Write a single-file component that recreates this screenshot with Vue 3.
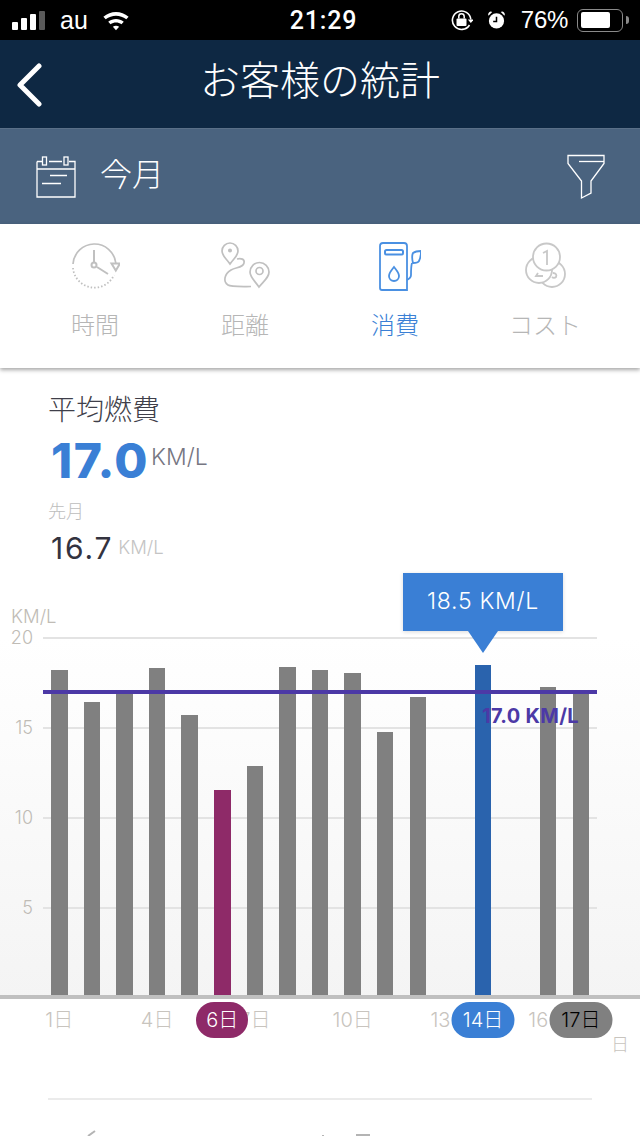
<script setup>
const scale = 18
const bars = [
  { day: 1, value: 18.2 }, { day: 2, value: 16.45 }, { day: 3, value: 17 },
  { day: 4, value: 18.35 }, { day: 5, value: 15.75 }, { day: 6, value: 11.55, tone: 'plum' },
  { day: 7, value: 12.9 }, { day: 8, value: 18.4 }, { day: 9, value: 18.25 },
  { day: 10, value: 18.05 }, { day: 11, value: 14.8 }, { day: 12, value: 16.7 },
  { day: 13, value: 0 }, { day: 14, value: 18.5, tone: 'blue' }, { day: 15, value: 0 },
  { day: 16, value: 17.3 }, { day: 17, value: 17 },
]
const gridLines = [20, 15, 10, 5]

const tabs = [
  { label: '時間', icon: 'clock' },
  { label: '距離', icon: 'route' },
  { label: '消費', icon: 'fuel', active: true },
  { label: 'コスト', icon: 'coins' },
]

const dayLabels = [
  { text: '1日', col: 0 }, { text: '4日', col: 3 }, { text: '7日', col: 6 },
  { text: '10日', col: 9 }, { text: '13日', col: 12 }, { text: '16日', col: 15 },
]
const dayPills = [
  { text: '6日', col: 5, width: 52, tone: 'plum' },
  { text: '14日', col: 13, width: 63, tone: 'blue' },
  { text: '17日', col: 16, width: 63, tone: 'grey' },
]
</script>

<template>
  <div class="screen">
    <div class="status">
      <div class="status-left">
        <div class="signal"><i></i><i></i><i></i><i class="off"></i></div>
        <span class="carrier">au</span>
        <svg class="wifi" width="28" height="21" viewBox="0 0 26 20">
          <path d="M1 6.5C8 .5 18 .5 25 6.5l-2.2 2.4C17 4.2 9 4.2 3.2 8.9z" fill="#fff" />
          <path d="M5.6 11.2c4.4-3.6 10.4-3.6 14.8 0l-2.2 2.4c-3.1-2.4-7.3-2.4-10.4 0z" fill="#fff" />
          <path d="M10 16c1.8-1.4 4.2-1.4 6 0l-3 3.2z" fill="#fff" />
        </svg>
      </div>
      <div class="clock">21:29</div>
      <div class="status-right">
        <svg width="22" height="22" viewBox="0 0 22 22" fill="none">
          <path d="M18.5 16A9.2 9.2 0 1 1 19.8 10.5" stroke="#fff" stroke-width="1.6" />
          <path d="M16.8 10.5h6l-3 3.5z" fill="#fff" />
          <rect x="5.5" y="9.5" width="10" height="7.5" rx="1" fill="#fff" />
          <path d="M7.8 9.5V7.5a2.7 2.7 0 0 1 5.4 0V9.5" stroke="#fff" stroke-width="1.5" />
        </svg>
        <svg class="alarm" width="19" height="22" viewBox="0 0 20 22">
          <circle cx="10" cy="12" r="8" fill="#fff" />
          <path d="M10 7.5v5H6.5" stroke="#000" stroke-width="1.6" fill="none" />
          <path d="M1.5 6.5 5.5 2.5A3 3 0 0 0 1.5 6.5zM18.5 6.5l-4-4a3 3 0 0 1 4 4z" fill="#fff" />
        </svg>
        <span class="percent">76%</span>
        <div class="battery"><div class="battery-fill"></div></div>
        <div class="battery-cap"></div>
      </div>
    </div>

    <header class="title-bar">
      <svg class="back" width="28" height="44" viewBox="0 0 28 44" fill="none">
        <path d="M24 3 5 22 24 41" stroke="#fff" stroke-width="5" stroke-linecap="round" stroke-linejoin="round" />
      </svg>
      <h1>お客様の統計</h1>
    </header>

    <div class="filter-bar">
      <div class="period">
        <svg width="40" height="42" viewBox="0 0 40 42" fill="none" stroke="#fff" stroke-width="1.3">
          <path d="M1 5.5h5M13 5.500h13M33 5.500h6V41H1V5.500M1 13h38" />
          <rect x="6.5" y="1" width="4" height="8" />
          <rect x="28" y="1" width="4" height="8" />
          <path d="M14 19.500h17M6 27.500h19" />
        </svg>
        <span>今月</span>
      </div>
      <svg class="funnel" width="38" height="46" viewBox="0 0 38 46" fill="none" stroke="#fff" stroke-width="1.3">
        <path d="M1 1.5h36V9.500L24 27v12l-9.500 5V27L1 9.500z" />
        <path d="M12 7.500h25" />
      </svg>
    </div>

    <nav class="tabs">
      <div v-for="tab in tabs" :key="tab.label" class="tab" :class="{ active: tab.active }">
        <svg v-if="tab.icon === 'clock'" width="50" height="50" viewBox="0 0 50 50" fill="none" stroke="#c0c0c0" stroke-width="1.7">
          <path d="M3 22A21.500 21.500 0 0 1 45.800 21" />
          <path d="M3 26A21.500 21.500 0 0 0 44 33" stroke-dasharray="1.5 2" stroke-width="1.8" />
          <path d="M24 8v12M27 25l11 7" stroke-width="2" />
          <circle cx="24" cy="23" r="2.500" stroke-width="2" />
          <path d="M41.500 21.500h8.500l-4.200 7z" stroke-width="2" />
        </svg>
        <svg v-else-if="tab.icon === 'route'" width="50" height="50" viewBox="0 0 50 50" fill="none" stroke="#c0c0c0" stroke-width="1.7">
          <path d="M10 22C6 16 2 14 2 9a8 8 0 0 1 16 0C18 14 14 16 10 22z" />
          <circle cx="10" cy="8.500" r="1.200" fill="#c0c0c0" />
          <path d="M39 45c-5-7-9-10-9-15a9.500 9.500 0 0 1 19 0c0 5-4 8-10 15z" />
          <circle cx="39.500" cy="29" r="3.500" />
          <path d="M17 17c4-1 8 0 7 4-1 5-8 4-13 7-7 4-8 12-3 15 2.500 2 14 1.500 23 1.500" />
        </svg>
        <svg v-else-if="tab.icon === 'fuel'" width="52" height="50" viewBox="0 0 52 50" fill="none" stroke="#4a90e2" stroke-width="1.8">
          <path d="M11 4a3 3 0 0 1 3-3h21a3 3 0 0 1 3 3v44H13a2 2 0 0 1-2-2z" />
          <rect x="16" y="8" width="18" height="4.500" rx="1.500" stroke-width="2" />
          <path d="M25 25c-3 4-5 6-5 9a5 5 0 0 0 10 0C30 31 28 29 25 25z" />
          <path d="M38 38c2-1 4-2 4-5 0-5 0-9 1-12" />
          <path d="M44 21c-1-4-1-8 0-10 2-1.500 5-2 8-2 0 4-1 8-2 10-1 2-4 2-6 2z" />
        </svg>
        <svg v-else width="50" height="50" viewBox="0 0 50 50" fill="none" stroke="#c8c8c8" stroke-width="1.8">
          <circle cx="32" cy="32" r="13" />
          <circle cx="19" cy="28" r="13" fill="#fff" />
          <path d="M18 31l-2 3h7M33 31c3 0 4 2 3 4-1 1-3 1-4 0" />
          <circle cx="26.500" cy="15" r="13.500" fill="#fff" />
          <path d="M23 11l4-2v14" />
        </svg>
        <span>{{ tab.label }}</span>
      </div>
    </nav>

    <section class="summary">
      <div class="summary-title">平均燃費</div>
      <div class="summary-main"><b>17.0</b><span>KM/L</span></div>
      <div class="summary-sub">先月</div>
      <div class="summary-last"><b>16.7</b><span>KM/L</span></div>
    </section>

    <section class="chart">
      <div class="chart-unit">KM/L</div>
      <div class="plot">
        <div v-for="line in gridLines" :key="line" class="grid-line" :style="{ bottom: line * scale - 1 + 'px' }">
          <span>{{ line }}</span>
        </div>
        <div class="bars">
          <div v-for="bar in bars" :key="bar.day" class="bar-col">
            <div class="bar" :class="bar.tone" :style="{ height: bar.value * scale + 'px' }"></div>
          </div>
        </div>
        <div class="avg-line" :style="{ bottom: 17 * scale - 2 + 'px' }"></div>
        <div class="avg-label">17.0 KM/L</div>
        <div class="tooltip">18.5 KM/L</div>
      </div>
      <div class="axis">
        <span v-for="label in dayLabels" :key="label.text" class="day" :style="{ left: label.col * 32.6 + 16.3 + 'px' }">{{ label.text }}</span>
        <span v-for="pill in dayPills" :key="pill.text" class="pill" :class="pill.tone" :style="{ left: pill.col * 32.6 + 16.3 + 'px', width: pill.width + 'px' }">{{ pill.text }}</span>
        <span class="axis-unit">日</span>
      </div>
    </section>

    <div class="next-section"></div>
    <svg class="peek" width="640" height="36" viewBox="0 0 640 36" fill="none" stroke="#b4b4b4" stroke-width="2">
      <path d="M95 31l-7 5M323 35v1M356 35h14" />
    </svg>
  </div>
</template>

<style>
body {
  background: #fff;
}
</style>

<style scoped>
.screen {
  width: 640px;
  height: 1136px;
  overflow: hidden;
  background: #fff;
  font-family: Inter, "Noto Sans CJK JP", sans-serif;
  display: flex;
  flex-direction: column;
}

.status {
  flex: none;
  height: 40px;
  background: #000;
  color: #fff;
  display: grid;
  grid-template-columns: 1fr auto 1fr;
  align-items: center;
  padding: 0 11px 0 12px;
  font-family: "Liberation Sans", sans-serif;
}
.status-left {
  display: flex;
  align-items: center;
}
.signal {
  display: flex;
  align-items: flex-end;
  gap: 3px;
  height: 19px;
}
.signal i {
  width: 6px;
  border-radius: 1px;
  background: #fff;
}
.signal i:nth-child(1) { height: 8px; }
.signal i:nth-child(2) { height: 12px; }
.signal i:nth-child(3) { height: 16px; }
.signal i:nth-child(4) { height: 19px; }
.signal i.off { background: #5a5a5a; }
.carrier {
  font-size: 25px;
  margin-left: 15px;
}
.wifi {
  margin-left: 14px;
}
.clock {
  font-family: Roboto, sans-serif;
  font-size: 25px;
  font-weight: 500;
  letter-spacing: 0.8px;
  margin-left: 6px;
}
.status-right {
  display: flex;
  align-items: center;
  justify-content: flex-end;
}
.alarm {
  margin-left: 14px;
}
.percent {
  font-size: 24px;
  letter-spacing: -0.3px;
  margin-left: 15px;
}
.battery {
  width: 46px;
  height: 23px;
  margin-left: 9px;
  border: 1.5px solid #8a8a8a;
  border-radius: 6px;
  padding: 2.5px;
  box-sizing: border-box;
}
.battery-fill {
  width: 76%;
  height: 100%;
  background: #fff;
  border-radius: 2px;
}
.battery-cap {
  width: 3px;
  height: 8px;
  margin-left: 3px;
  background: #8a8a8a;
  border-radius: 0 3px 3px 0;
}

.title-bar {
  flex: none;
  height: 88px;
  background: #0e2843;
  position: relative;
  display: flex;
  align-items: center;
  justify-content: center;
}
.back {
  position: absolute;
  left: 15px;
  top: 23px;
}
.title-bar h1 {
  margin: 0 0 12px;
  font-size: 40px;
  font-weight: 300;
  color: #fff;
  font-family: "Noto Sans CJK JP", sans-serif;
}

.filter-bar {
  flex: none;
  height: 96px;
  background: #4a637f;
  border-top: 1px solid #5a7088;
  box-sizing: border-box;
  display: flex;
  align-items: center;
  justify-content: space-between;
  padding: 0 35px 0 36px;
}
.period {
  display: flex;
  align-items: center;
  gap: 24px;
  color: #fff;
  font-size: 32px;
  font-weight: 300;
}
.period span {
  margin-bottom: 9px;
}

.tabs {
  flex: none;
  height: 144px;
  background: #fff;
  box-sizing: border-box;
  padding: 18px 20px 0;
  display: grid;
  grid-template-columns: repeat(4, 150px);
  box-shadow: 0 2px 4px rgba(0, 0, 0, 0.35);
  position: relative;
  z-index: 2;
}
.tab {
  display: flex;
  flex-direction: column;
  align-items: center;
  color: #b6b6b6;
  font-size: 24px;
  font-weight: 300;
  gap: 16px;
}
.tab.active {
  color: #3a7fd5;
}
.tab span {
  line-height: 36px;
}

.summary {
  flex: none;
  height: 208px;
  box-sizing: border-box;
  padding: 22px 0 0 48px;
}
.summary-title {
  font-size: 28px;
  line-height: 40px;
  color: #3f3f4a;
  font-weight: 300;
}
.summary-main {
  display: flex;
  align-items: flex-start;
  margin-top: 4px;
  height: 54px;
}
.summary-main b {
  font-size: 48px;
  line-height: 54px;
  font-weight: 800;
  color: #3a7fd5;
  margin-left: 3px;
  letter-spacing: 1.5px;
}
.summary-main span {
  font-size: 23px;
  line-height: 26px;
  margin: 10px 0 0 2px;
  color: #767682;
  font-weight: 300;
}
.summary-sub {
  margin-top: 11px;
  font-size: 18px;
  line-height: 26px;
  color: #bdbdbd;
  font-weight: 300;
}
.summary-last {
  display: flex;
  align-items: flex-start;
  margin-top: 3px;
}
.summary-last b {
  font-size: 30px;
  line-height: 40px;
  font-weight: 400;
  color: #33333f;
  margin-left: 3px;
  letter-spacing: 1.8px;
}
.summary-last span {
  font-size: 18.5px;
  line-height: 24px;
  color: #c4c4c4;
  margin: 7px 0 0 5px;
  font-weight: 300;
}

.chart {
  flex: none;
  position: relative;
  height: 522px;
}
.chart-unit {
  position: absolute;
  left: 11px;
  top: 30px;
  font-size: 18.5px;
  line-height: 20px;
  color: #c0bcb6;
  font-weight: 300;
}
.plot {
  position: absolute;
  left: 43px;
  top: 62px;
  width: 554px;
  height: 360px;
}
.plot::before {
  content: "";
  position: absolute;
  left: -43px;
  right: -43px;
  top: 0;
  bottom: 0;
  background: linear-gradient(#fff, #f4f4f4);
}
.grid-line {
  position: absolute;
  left: 0;
  right: 0;
  height: 2px;
  background: #e3e3e3;
}
.grid-line span {
  position: absolute;
  right: 100%;
  margin-right: 10px;
  top: -10px;
  font-size: 18px;
  line-height: 22px;
  color: #c0bcb6;
  font-weight: 300;
}
.bars {
  position: absolute;
  inset: 0;
  display: flex;
  align-items: flex-end;
}
.bar-col {
  flex: 1;
  display: flex;
  justify-content: center;
}
.bar {
  width: 16.5px;
  background: #808080;
}
.bar.plum { background: #8e2a68; }
.bar.blue { background: #2a63ad; }
.avg-line {
  position: absolute;
  left: 0;
  right: 0;
  height: 4px;
  background: #4c39a6;
}
.avg-label {
  position: absolute;
  left: 439px;
  top: 66px;
  font-size: 20px;
  letter-spacing: 0.3px;
  line-height: 24px;
  font-weight: 700;
  color: #4c39a6;
  white-space: nowrap;
}
.tooltip {
  position: absolute;
  left: 360px;
  top: -65px;
  width: 160px;
  height: 58px;
  background: #3a7fd5;
  color: #fff;
  font-size: 23px;
  letter-spacing: 0.7px;
  font-weight: 300;
  line-height: 56px;
  text-align: center;
  white-space: nowrap;
  box-shadow: 0 1px 4px rgba(0, 0, 0, 0.15);
}
.tooltip::after {
  content: "";
  position: absolute;
  left: 65px;
  top: 100%;
  border-left: 15px solid transparent;
  border-right: 15px solid transparent;
  border-top: 22px solid #3a7fd5;
}
.axis {
  position: absolute;
  left: 43px;
  top: 422px;
  width: 554px;
  height: 100px;
}
.axis::before {
  content: "";
  position: absolute;
  left: -43px;
  right: -43px;
  top: -3px;
  height: 4px;
  background: #c0c0c0;
}
.day,
.pill {
  position: absolute;
  transform: translateX(-50%);
  white-space: nowrap;
  font-size: 20px;
  font-weight: 300;
  line-height: 36px;
  top: 4px;
}
.day {
  color: #c8c4be;
}
.pill {
  text-align: center;
  border-radius: 18px;
  color: #fff;
  height: 36px;
}
.pill.plum { background: #8e2a68; }
.pill.blue { background: #3a7fd5; }
.pill.grey { background: #808080; color: #000; }
.axis-unit {
  position: absolute;
  right: -32px;
  top: 34px;
  font-size: 18px;
  line-height: 26px;
  color: #c8c4be;
  font-weight: 300;
}

.next-section {
  flex: none;
  margin: 0 48px;
  height: 2px;
  background: #ebebeb;
}
.peek {
  flex: none;
  display: block;
}
</style>
